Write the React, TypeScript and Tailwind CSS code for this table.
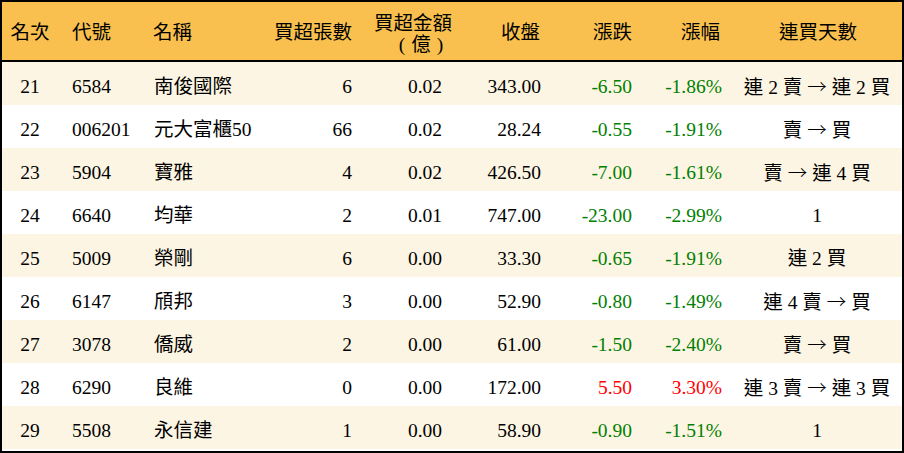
// Net-buy ranking table (rows 21–29), broker summary style

type Row = {
  rank: number;
  code: string;
  name: string;
  lots: number;
  amount: string;
  close: string;
  change: string;
  pct: string;
  streak: string;
};

const ROWS: Row[] = [
  { rank: 21, code: '6584', name: '南俊國際', lots: 6, amount: '0.02', close: '343.00', change: '-6.50', pct: '-1.86%', streak: '連 2 賣 → 連 2 買' },
  { rank: 22, code: '006201', name: '元大富櫃50', lots: 66, amount: '0.02', close: '28.24', change: '-0.55', pct: '-1.91%', streak: '賣 → 買' },
  { rank: 23, code: '5904', name: '寶雅', lots: 4, amount: '0.02', close: '426.50', change: '-7.00', pct: '-1.61%', streak: '賣 → 連 4 買' },
  { rank: 24, code: '6640', name: '均華', lots: 2, amount: '0.01', close: '747.00', change: '-23.00', pct: '-2.99%', streak: '1' },
  { rank: 25, code: '5009', name: '榮剛', lots: 6, amount: '0.00', close: '33.30', change: '-0.65', pct: '-1.91%', streak: '連 2 買' },
  { rank: 26, code: '6147', name: '頎邦', lots: 3, amount: '0.00', close: '52.90', change: '-0.80', pct: '-1.49%', streak: '連 4 賣 → 買' },
  { rank: 27, code: '3078', name: '僑威', lots: 2, amount: '0.00', close: '61.00', change: '-1.50', pct: '-2.40%', streak: '賣 → 買' },
  { rank: 28, code: '6290', name: '良維', lots: 0, amount: '0.00', close: '172.00', change: '5.50', pct: '3.30%', streak: '連 3 賣 → 連 3 買' },
  { rank: 29, code: '5508', name: '永信建', lots: 1, amount: '0.00', close: '58.90', change: '-0.90', pct: '-1.51%', streak: '1' },
];

// ── Layout ───────────────────────────────────────────────────────────────

const GRID =
  'grid grid-cols-[56px_82px_120px_106px_90px_99px_91px_90px_1fr] items-center';

const FONT = "font-['Liberation_Serif','Noto_Sans_CJK_TC',serif]";

function trendColor(v: string) {
  return v.startsWith('-') ? 'text-[#008000]' : 'text-[#ff0000]';
}

// arrow in the CJK face, so it gets the long full-width shape
function Streak({ text }: { text: string }) {
  const parts = text.split('→');
  return (
    <>
      {parts.map((p, i) => (
        <span key={i}>
          {i > 0 && <span className="font-['Noto_Sans_CJK_TC',sans-serif] font-light">→</span>}
          {p}
        </span>
      ))}
    </>
  );
}

export default function App() {
  return (
    <div className={`w-[904px] h-[453px] border-2 border-black bg-white text-black text-[19.5px] leading-none ${FONT}`}>
      {/* Header */}
      <div className={`${GRID} h-[60px] pt-[4px] bg-[#f9c04f] border-b-2 border-black`}>
        <div className="text-center">名次</div>
        <div className="pl-[14px]">代號</div>
        <div className="pl-[13px]">名稱</div>
        <div className="pr-[14px] text-right">買超張數</div>
        <div className="flex flex-col items-center leading-[21px] pl-[4px] pt-[2px]">
          <span>買超金額</span>
          <span className="flex gap-[6px] ml-[16px]">
            <span>(</span>
            <span>億</span>
            <span>)</span>
          </span>
        </div>
        <div className="pr-[15px] text-right">收盤</div>
        <div className="pr-[14px] text-right">漲跌</div>
        <div className="pr-[16px] text-right">漲幅</div>
        <div className="text-center pr-[2px]">連買天數</div>
      </div>

      {/* Body */}
      {ROWS.map((r, i) => (
        <div
          key={r.rank}
          className={`${GRID} h-[43px] pt-[6px] ${i % 2 === 0 ? 'bg-[#fdf5e3]' : 'bg-white'}`}
        >
          <div className="text-center">{r.rank}</div>
          <div className="pl-[14px]">{r.code}</div>
          <div className="pl-[14px] whitespace-nowrap">{r.name}</div>
          <div className="pr-[14px] text-right">{r.lots}</div>
          <div className="pr-[14px] text-right">{r.amount}</div>
          <div className="pr-[14px] text-right">{r.close}</div>
          <div className={`pr-[14px] text-right ${trendColor(r.change)}`}>{r.change}</div>
          <div className={`pr-[14px] text-right ${trendColor(r.pct)}`}>{r.pct}</div>
          <div className="text-center whitespace-pre pr-[4px]">
            <Streak text={r.streak} />
          </div>
        </div>
      ))}
    </div>
  );
}
